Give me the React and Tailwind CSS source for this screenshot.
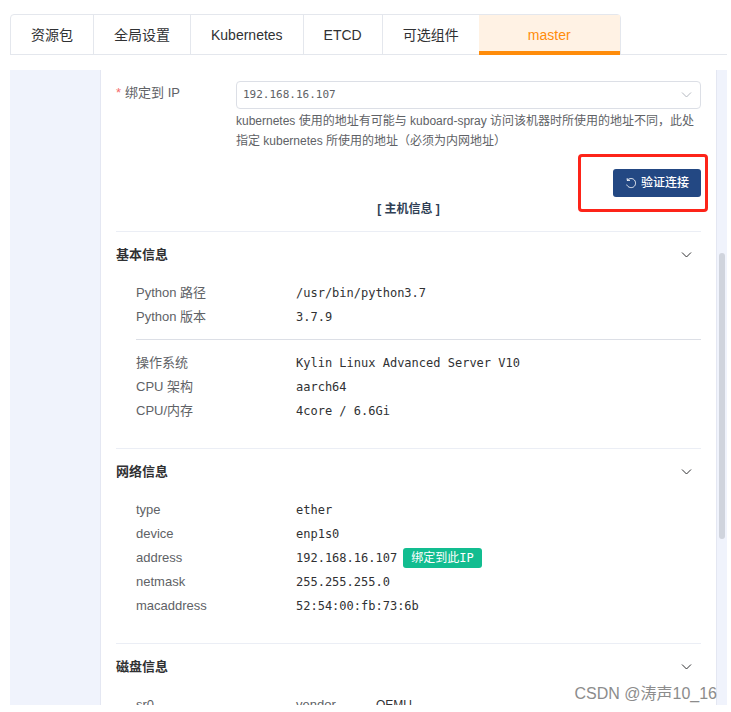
import React from "react";

const tabs = ["资源包", "全局设置", "Kubernetes", "ETCD", "可选组件"];

function Chevron({ className }) {
  return (
    <svg viewBox="0 0 12 12" className={className} fill="none" stroke="currentColor" aria-hidden="true">
      <path d="M1 3.5 L5.5 8 L10 3.5" />
    </svg>
  );
}

function Section({ title, children }) {
  return (
    <section className="border-t border-[#ebeef5] pb-[25px]">
      <h2 className="mb-[3px]">
        <button type="button" className="flex h-[46px] w-full items-center justify-between pr-2 text-[13px] font-bold text-[#303133]">
          {title}
          <Chevron className="size-3" />
        </button>
      </h2>
      <div className="pl-5">{children}</div>
    </section>
  );
}

function Rows({ children }) {
  return <dl className="text-[13px] leading-6">{children}</dl>;
}

function Row({ label, children }) {
  return (
    <div className="flex h-6">
      <dt className="w-40 shrink-0 text-[#606266]">{label}</dt>
      <dd className="flex items-center whitespace-pre font-['DejaVu_Sans_Mono','Noto_Sans_CJK_SC',monospace] text-[12px] text-[#303133]">
        {children}
      </dd>
    </div>
  );
}

export default function App() {
  return (
    <div className="relative flex h-screen flex-col overflow-hidden bg-white pt-[14px] pr-1 pb-[7px] pl-[10px] font-['Liberation_Sans','Noto_Sans_CJK_SC',sans-serif]">
      <nav className="flex h-[41px] shrink-0 border-b border-[#e4e7ed] text-sm text-[#303133]">
        <div role="tablist" className="flex h-[41px] rounded-t border border-[#e4e7ed]">
          {tabs.map((t) => (
            <button key={t} type="button" role="tab" aria-selected="false" className="border-r border-[#e4e7ed] px-5 whitespace-nowrap">
              {t}
            </button>
          ))}
          <button
            type="button"
            role="tab"
            aria-selected="true"
            className="-mb-px -ml-px h-10 w-[141px] border-b-4 border-[#ff8c0a] bg-[#fff2e4] pt-1 text-[#ff8c0a]"
          >
            master
          </button>
        </div>
      </nav>

      <div className="mt-[15px] flex min-h-0 flex-1 overflow-hidden bg-[#f0f3fc]">
        <aside className="w-[90px] shrink-0" />
        <main className="min-w-0 flex-1 overflow-hidden border-x border-[#e4e7f2] bg-white px-[15px] pt-2">
          <div className="flex">
            <label htmlFor="ip" className="w-[120px] shrink-0 pt-px text-[13px] leading-7 text-[#606266]">
              <span className="mr-1 text-[#f56c6c]">*</span>绑定到 IP
            </label>
            <div className="min-w-0 flex-1 pt-[3px]">
              <div className="relative">
                <select
                  id="ip"
                  className="block h-7 w-full appearance-none rounded border border-[#dcdfe6] bg-white px-[6px] font-['DejaVu_Sans_Mono',monospace] text-[11px] text-[#606266]"
                >
                  <option>192.168.16.107</option>
                </select>
                <Chevron className="pointer-events-none absolute top-2 right-2 size-3 text-[#b4b8c0]" />
              </div>
              <p className="pt-[2px] text-[12px] leading-5 text-[#606266]">
                kubernetes 使用的地址有可能与 kuboard-spray 访问该机器时所使用的地址不同，此处指定 kubernetes 所使用的地址（必须为内网地址）
              </p>
            </div>
          </div>

          <div className="mt-[18px] flex justify-end">
            <div className="relative">
              <button type="button" className="flex h-7 items-center gap-1 rounded-[3px] bg-[#234883] px-3 text-[12px] font-medium text-white">
                <svg viewBox="0 0 12 12" className="size-3" fill="none" stroke="currentColor" strokeWidth="0.9" aria-hidden="true">
                  <path d="M2 3.4 H5 M2.2 1.2 V3.4 C4.2 1 7.6 1 9.4 3 C11.2 5.2 10.8 8.4 8.6 9.9 C6.2 11.4 2.8 10.4 1.7 7.6" />
                </svg>
                验证连接
              </button>
              <div className="pointer-events-none absolute -top-[15px] -right-[7px] -bottom-[15px] -left-[35px] rounded-[4px] border-3 border-[#fd2419]" />
            </div>
          </div>

          <h1 className="pt-[2px] pb-[12px] text-center text-[12px] leading-5 font-bold text-[#303f55]">[ 主机信息 ]</h1>

          <Section title="基本信息">
            <Rows>
              <Row label="Python 路径">/usr/bin/python3.7</Row>
              <Row label="Python 版本">3.7.9</Row>
            </Rows>
            <hr className="mt-[10px] mb-[11px] border-[#dcdfe6]" />
            <Rows>
              <Row label="操作系统">Kylin Linux Advanced Server V10</Row>
              <Row label="CPU 架构">aarch64</Row>
              <Row label="CPU/内存">4core / 6.6Gi</Row>
            </Rows>
          </Section>

          <Section title="网络信息">
            <Rows>
              <Row label="type">ether</Row>
              <Row label="device">enp1s0</Row>
              <Row label="address">
                192.168.16.107
                <button type="button" className="ml-[6px] h-5 rounded-[3px] bg-[#12bd90] px-2 leading-5 text-white">
                  绑定到此IP
                </button>
              </Row>
              <Row label="netmask">255.255.255.0</Row>
              <Row label="macaddress">52:54:00:fb:73:6b</Row>
            </Rows>
          </Section>

          <Section title="磁盘信息">
            <dl className="flex text-[13px] leading-6 text-[#606266]">
              <dt className="w-40 shrink-0">sr0</dt>
              <dd>
                <dl className="flex">
                  <dt className="w-20 shrink-0">vendor</dt>
                  <dd className="text-[12px] text-[#303133]">QEMU</dd>
                </dl>
              </dd>
            </dl>
          </Section>
        </main>
        <div className="w-[10px] shrink-0 px-[2px] pt-[183px]">
          <div className="h-[286px] rounded-full bg-[#d0d4dd]" />
        </div>
      </div>

      <p className="absolute right-[14px] bottom-[6px] text-base leading-6 text-[#8c8c8c]">CSDN @涛声10_16</p>
    </div>
  );
}
